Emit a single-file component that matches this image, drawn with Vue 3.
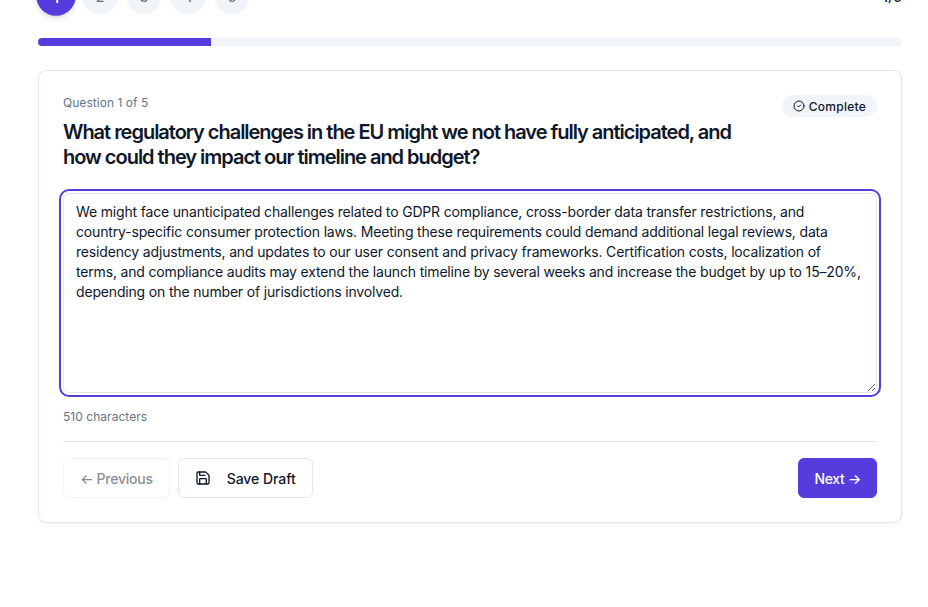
<template>
  <div class="page">
    <div class="stepper">
      <div class="steps">
        <span
          v-for="n in 5"
          :key="n"
          class="step"
          :class="{ active: n === current }"
        >{{ n }}</span>
      </div>
      <span class="step-count">{{ current }}/{{ total }}</span>
    </div>

    <div class="progress">
      <div class="progress-fill" :style="{ width: (current / total) * 100 + '%' }"></div>
    </div>

    <div class="card">
      <div class="card-head">
        <div class="question">
          <div class="question-label">Question {{ current }} of {{ total }}</div>
          <h2>What regulatory challenges in the EU might we not have fully anticipated, and how could they impact our timeline and budget?</h2>
        </div>
        <span class="badge">
          <svg viewBox="0 0 24 24" fill="none" stroke="currentColor" stroke-width="2" stroke-linecap="round" stroke-linejoin="round">
            <circle cx="12" cy="12" r="10"/>
            <path d="m9 12 2 2 4-4"/>
          </svg>
          Complete
        </span>
      </div>

      <textarea class="answer" v-model="answer" spellcheck="false"></textarea>
      <div class="char-count">{{ answer.length }} characters</div>

      <div class="actions">
        <div class="actions-left">
          <button class="btn btn-disabled" disabled>← Previous</button>
          <button class="btn btn-outline">
            <svg viewBox="0 0 24 24" fill="none" stroke="currentColor" stroke-width="2" stroke-linecap="round" stroke-linejoin="round">
              <path d="M15.2 3a2 2 0 0 1 1.4.6l3.8 3.8a2 2 0 0 1 .6 1.4V19a2 2 0 0 1-2 2H5a2 2 0 0 1-2-2V5a2 2 0 0 1 2-2z"/>
              <path d="M17 21v-7a1 1 0 0 0-1-1H8a1 1 0 0 0-1 1v7"/>
              <path d="M7 3v4a1 1 0 0 0 1 1h7"/>
            </svg>
            Save Draft
          </button>
        </div>
        <button class="btn btn-primary">Next →</button>
      </div>
    </div>
  </div>
</template>

<script setup>
import { ref } from 'vue'

const current = ref(1)
const total = ref(5)
const answer = ref('We might face unanticipated challenges related to GDPR compliance, cross-border data transfer restrictions, and country-specific consumer protection laws. Meeting these requirements could demand additional legal reviews, data residency adjustments, and updates to our user consent and privacy frameworks. Certification costs, localization of terms, and compliance audits may extend the launch timeline by several weeks and increase the budget by up to 15–20%, depending on the number of jurisdictions involved.')
</script>

<style>
html, body {
  height: 100%;
  overflow: hidden;
  background: #fff;
}
</style>

<style scoped>
.page {
  box-sizing: border-box;
  width: 928px;
  margin-top: -22px;
  padding: 0 26px 0 38px;
  font-family: Inter, "Liberation Sans", sans-serif;
  color: #0f172a;
}

.stepper {
  display: flex;
  justify-content: space-between;
  align-items: center;
  height: 36px;
  margin-bottom: 24px;
}

.steps {
  display: flex;
  gap: 8px;
}

.step {
  width: 36px;
  height: 36px;
  border-radius: 50%;
  display: flex;
  align-items: center;
  justify-content: center;
  background: #f1f5f9;
  color: #64748b;
  font-size: 14px;
  font-weight: 500;
}

.step.active {
  background: #573cdd;
  color: #fff;
  transform: scale(1.1);
  box-shadow: 0 4px 6px -1px rgba(0, 0, 0, 0.1), 0 2px 4px -2px rgba(0, 0, 0, 0.1);
}

.step-count {
  font-size: 14px;
  font-weight: 500;
}

.progress {
  height: 8px;
  border-radius: 999px;
  background: #f1f5f9;
  overflow: hidden;
  margin-bottom: 24px;
}

.progress-fill {
  height: 100%;
  background: #573cdd;
}

.card {
  border: 1px solid #e2e8f0;
  border-radius: 8px;
  background: #fff;
  padding: 24px;
  box-shadow: 0 1px 2px rgba(0, 0, 0, 0.05);
}

.card-head {
  display: flex;
  justify-content: space-between;
  align-items: flex-start;
  gap: 16px;
  margin-bottom: 23px;
}

.question {
  width: 700px;
}

.question-label {
  font-size: 12px;
  line-height: 16px;
  color: #64748b;
  letter-spacing: 0.04px;
  margin-bottom: 9px;
}

h2 {
  margin: 0;
  font-size: 20px;
  line-height: 25px;
  font-weight: 600;
  letter-spacing: -1.02px;
}

.badge {
  display: inline-flex;
  align-items: center;
  gap: 4px;
  height: 22px;
  padding: 0 11px;
  border-radius: 999px;
  background: #f1f5f9;
  font-size: 12px;
  font-weight: 500;
  letter-spacing: 0.25px;
  white-space: nowrap;
}

.badge svg {
  width: 12px;
  height: 12px;
}

.answer {
  display: block;
  box-sizing: border-box;
  width: 100%;
  height: 200px;
  padding: 8px 14px 8px 12px;
  border: 1px solid #e2e8f0;
  border-radius: 6px;
  outline: 2px solid #573cdd;
  outline-offset: 2px;
  background: #fff;
  color: #0f172a;
  font-family: inherit;
  font-size: 14px;
  line-height: 20px;
  letter-spacing: -0.17px;
  resize: vertical;
}

.char-count {
  font-size: 12px;
  line-height: 16px;
  color: #64748b;
  letter-spacing: 0.04px;
  margin-top: 16px;
}

.actions {
  display: flex;
  justify-content: space-between;
  align-items: center;
  margin-top: 16px;
  padding-top: 16px;
  border-top: 1px solid #e2e8f0;
}

.actions-left {
  display: flex;
  gap: 8px;
}

.btn {
  display: inline-flex;
  align-items: center;
  justify-content: center;
  height: 40px;
  padding: 0 16px;
  border-radius: 6px;
  border: 1px solid #e2e8f0;
  background: #fff;
  color: #0f172a;
  font-family: inherit;
  font-size: 14px;
  font-weight: 500;
  white-space: nowrap;
}

.btn svg {
  width: 16px;
  height: 16px;
  margin-right: 16px;
}

.btn-disabled {
  letter-spacing: -0.25px;
  opacity: 0.5;
}

.btn-outline {
  letter-spacing: -0.05px;
}

.btn-primary {
  padding: 0 15px;
  border-color: #573cdd;
  background: #573cdd;
  color: #fff;
  letter-spacing: -0.3px;
}
</style>
